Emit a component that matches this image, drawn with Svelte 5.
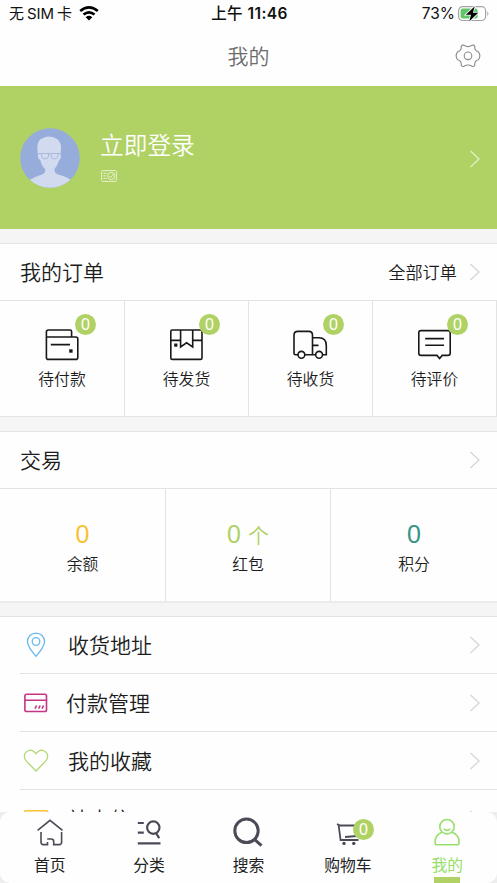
<script lang="ts">
  type Order = { icon: string; label: string; count: number };
  type Asset = { value: string; unit?: string; label: string; tone: string };
  type Tab = { icon: string; label: string; badge?: number };

  const orders: Order[] = [
    { icon: 'wallet', label: '待付款', count: 0 },
    { icon: 'box', label: '待发货', count: 0 },
    { icon: 'truck', label: '待收货', count: 0 },
    { icon: 'comment', label: '待评价', count: 0 },
  ];

  const assets: Asset[] = [
    { value: '0', label: '余额', tone: 'yellow' },
    { value: '0', unit: '个', label: '红包', tone: 'green' },
    { value: '0', label: '积分', tone: 'teal' },
  ];

  const menu = [
    { icon: 'pin', label: '收货地址' },
    { icon: 'card', label: '付款管理' },
    { icon: 'heart', label: '我的收藏' },
    { icon: 'mail', label: '站内信' },
  ];

  const tabs: Tab[] = [
    { icon: 'home', label: '首页' },
    { icon: 'category', label: '分类' },
    { icon: 'search', label: '搜索' },
    { icon: 'cart', label: '购物车', badge: 0 },
    { icon: 'user', label: '我的' },
  ];

  let active = $state('user');
</script>

{#snippet arrow()}
  <svg class="arrow" width="12" height="20" viewBox="0 0 12 20">
    <path d="M1.5 2L10 10L1.5 18" />
  </svg>
{/snippet}

<div class="screen">
  <div class="status">
    <div class="carrier">
      <span>无 SIM 卡</span>
      <svg width="20" height="15" viewBox="0 0 20 15">
        <path class="wave" d="M1.2 5.1Q10-2.3 18.8 5.1M4.5 8.6Q10 4.1 15.5 8.6" />
        <path d="M6.7 11.2Q10 8.4 13.3 11.2L10 14.6Z" />
      </svg>
    </div>
    <div class="clock">上午 <b>11:46</b></div>
    <div class="power">
      <span>73%</span>
      <svg width="33" height="18" viewBox="0 0 33 18">
        <rect x="1.6" y="1.7" width="27" height="13.8" rx="4" fill="#fff" stroke="#a3a3a3" stroke-width="1.2" />
        <rect x="3.6" y="3.6" width="17" height="10" rx="2" fill="#62c466" />
        <path d="M30.3 6.2Q32.6 8.6 30.3 11Z" fill="#a3a3a3" />
        <path class="bolt" d="M17.8 1.2L8.8 9.8H14L12.2 16.6L21.3 7.7H15.9Z" />
      </svg>
    </div>
  </div>

  <header>
    <h1>我的</h1>
    <svg class="gear" width="26" height="26" viewBox="0 0 26 26">
      <path d="M6.2 3.3Q7.3 1.6 9 2.3Q13 5 17 2.3Q18.8 1.6 19.8 3.3Q19.2 7.6 23.4 8.9Q26.3 12.8 23.4 16.8Q19.2 18 19.8 22.2Q18.8 24 17 23.2Q13 20.7 9 23.2Q7.3 24 6.2 22.2Q6.8 18 2.6 16.8Q-.3 12.8 2.6 8.9Q6.8 7.6 6.2 3.3Z" />
      <circle cx="13" cy="12.8" r="3.8" />
    </svg>
  </header>

  <section class="profile">
    <svg class="avatar" width="60" height="60" viewBox="0 0 60 60">
      <clipPath id="round"><circle cx="30" cy="30" r="29.8" /></clipPath>
      <g clip-path="url(#round)">
        <rect width="60" height="60" fill="#96acdb" />
        <path fill="#d1daee" d="M18 27Q15.5 13 22 10.5Q29 6.5 37 11Q42.5 14 40.5 27Q42 29.5 39 32.5Q37.5 38 34.5 41Q34 45 38 46.5Q49 49 53 54V60H7V54Q13 49 22 46.5Q26 45 25 41Q21.5 38 20.5 32.5Q17 29.5 18 27Z" />
        <path fill="none" stroke="#a9bade" stroke-width="1" d="M17 25.5H41.5M21.5 25.5V28Q22 31 25 31Q28 31 28.5 28V26M31 26V28Q31.5 31 34.5 31Q37.5 31 38 28V25.5" />
      </g>
    </svg>
    <div class="login">
      <span>立即登录</span>
      <svg width="16" height="12" viewBox="0 0 16 12">
        <rect x=".6" y=".6" width="14.8" height="10.8" rx="1" />
        <path d="M2.5 3.3H5.5M2.5 5.8H4.8M2.5 8.3H5.5M8.4 6L9.8 7.5L13 3.5" />
        <circle cx="10.2" cy="6" r="3.6" />
      </svg>
    </div>
    {@render arrow()}
  </section>

  <section class="panel orders">
    <div class="head">
      <h2>我的订单</h2>
      <span class="more">全部订单</span>
      {@render arrow()}
    </div>
    <div class="grid four">
      {#each orders as order (order.icon)}
        <div class="order">
          <div class="icon">
            <svg width="36" height="36" viewBox="0 0 36 36">
              {#if order.icon === 'wallet'}
                <path d="M27.6 11V5.6Q27.6 4 26 4H4.4Q2.4 4 2.4 6V31.4Q2.4 33.4 4.4 33.4H31.8Q33.8 33.4 33.8 31.4V13Q33.8 11 31.8 11H2.4M6.8 18.6H26" />
                <rect class="dot" x="25.2" y="23.3" width="3.4" height="3.4" />
              {:else if order.icon === 'box'}
                <rect x="2.8" y="4" width="31.2" height="29.4" rx="1.5" />
                <path d="M2.8 14.4H12.6M24.7 14.4H34M12.6 4V21L18.6 16.8L24.7 21V4" />
                <rect class="dot" x="6.2" y="17.5" width="3.2" height="3.2" />
              {:else if order.icon === 'truck'}
                <path d="M6 28.8H3.6Q2 28.8 2 27.2V9.2Q2 5.4 5.8 5.4H16.8Q20.5 5.4 20.5 9.2V28.8M12.8 28.8H23.6M20.5 11.8H27Q34.3 11.8 34.3 19.5V28.8H30.6M21 19.4H26.5" />
                <circle cx="9.4" cy="28.8" r="3.4" />
                <circle cx="27.1" cy="28.8" r="3.4" />
              {:else}
                <path d="M5 4.6H32Q34.2 4.6 34.2 6.8V27.2Q34.2 29.4 32 29.4H26.2L23.6 32.6L21 29.4H5Q2.8 29.4 2.8 27.2V6.8Q2.8 4.6 5 4.6ZM9.2 12.6H28M9.2 19.2H28" />
              {/if}
            </svg>
            <span class="badge">{order.count}</span>
          </div>
          <span>{order.label}</span>
        </div>
      {/each}
    </div>
  </section>

  <section class="panel assets">
    <div class="head">
      <h2>交易</h2>
      {@render arrow()}
    </div>
    <div class="grid three">
      {#each assets as asset (asset.label)}
        <div class="asset">
          <div class="value {asset.tone}">
            {asset.value}{#if asset.unit}<small>{asset.unit}</small>{/if}
          </div>
          <span>{asset.label}</span>
        </div>
      {/each}
    </div>
  </section>

  <section class="menu">
    {#each menu as item (item.icon)}
      <div class="row {item.icon}">
        <svg class="glyph" width="28" height="28" viewBox="0 0 28 28">
          {#if item.icon === 'pin'}
            <path d="M14 25.4Q5.4 15.2 5.4 10.4A8.6 8.3 0 0 1 22.6 10.4Q22.6 15.2 14 25.4Z" />
            <circle cx="14" cy="10.5" r="3.8" />
          {:else if item.icon === 'card'}
            <rect x="2.9" y="5.3" width="21.6" height="17.2" rx="1.8" />
            <path d="M3 11.2H24.5M13 19.7L14.6 16.5M16.6 19.7L18.2 16.5M20 19.7L21.6 16.5" />
          {:else if item.icon === 'heart'}
            <path d="M14 24L4.6 14.4Q.7 9.8 3.6 5.6Q8.8.2 14 6.6Q19.2.2 24.4 5.6Q27.3 9.8 23.4 14.4Z" />
          {:else}
            <rect x="2.3" y="5.7" width="23.6" height="18" rx="2" />
            <path d="M2.5 7.5L14 16.5L25.5 7.5" />
          {/if}
        </svg>
        <div class="line">
          <span>{item.label}</span>
          {@render arrow()}
        </div>
      </div>
    {/each}
  </section>

  <div class="dock">
    <nav>
      {#each tabs as tab (tab.icon)}
        <button class:active={active === tab.icon} onclick={() => (active = tab.icon)}>
          <div class="icon">
            <svg width="36" height="36" viewBox="0 0 36 36">
              {#if tab.icon === 'home'}
                <path d="M5.6 15.4L18 5.4L30.5 15.4M9 17V27.3Q9 29.6 11.3 29.6H15.5V27M15.2 24H19Q21.7 24 21.7 26.5V29.6H27.3Q29.6 29.6 29.6 27.3V17" />
              {:else if tab.icon === 'category'}
                <path class="bold" d="M6.8 8H12.8M6.8 17.7H12.8M6.8 28.3H29.5M25 18L28.2 23.2" />
                <circle class="bold" cx="22.3" cy="12.6" r="6.2" />
              {:else if tab.icon === 'search'}
                <circle class="heavy" cx="16.5" cy="15.8" r="11.7" />
                <path class="heavy" d="M24.8 24.6L31.5 30.6" />
              {:else if tab.icon === 'cart'}
                <path class="cart" d="M7 9L10 10.5H28M8.6 10L10.6 25H28.5M15 22L27 21" />
                <circle class="wheel" cx="14" cy="28.4" r="1.7" />
                <circle class="wheel" cx="23.8" cy="28.4" r="1.7" />
              {:else}
                <circle cx="18" cy="11.7" r="7.2" />
                <path d="M13 17.3Q6 20 6 27.5Q6 29.8 8.3 29.8H27.9Q30.2 29.8 30.2 27.5Q30.2 20 23 17.3M14.7 13.7Q18 17 21.3 13.7" />
              {/if}
            </svg>
            {#if tab.badge !== undefined}
              <span class="badge">{tab.badge}</span>
            {/if}
          </div>
          <span>{tab.label}</span>
        </button>
      {/each}
    </nav>
  </div>
</div>

<style>
  :global(body) {
    margin: 0;
    background: #f5f5f5;
  }
  .screen {
    position: relative;
    width: 497px;
    height: 883px;
    overflow: hidden;
    background: #f5f5f5;
    color: #1c1c1c;
    font-family: 'Liberation Sans', 'Noto Sans CJK SC', sans-serif;
    font-weight: 350;
  }
  svg {
    display: block;
    flex: none;
  }
  h1,
  h2 {
    margin: 0;
    font-weight: inherit;
    font-size: 21px;
  }

  .status {
    display: grid;
    grid-template-columns: 1fr auto 1fr;
    align-items: center;
    height: 28px;
    padding: 0 7px 0 9px;
    background: #fefefe;
    color: #111;
    font-family: Inter, 'Noto Sans CJK SC', sans-serif;
    font-weight: 400;
    font-size: 15.5px;
    line-height: 28px;
  }
  .carrier,
  .power {
    display: flex;
    align-items: center;
  }
  .carrier {
    gap: 7px;
    font-size: 15px;
    word-spacing: -1.3px;
  }
  .carrier svg {
    margin-top: -1px;
  }
  .wave {
    fill: none;
    stroke: #000;
    stroke-width: 2.6;
  }
  .clock {
    font-weight: 500;
    letter-spacing: 0.4px;
  }
  .clock b {
    font-weight: 600;
  }
  .power {
    justify-content: flex-end;
    gap: 2px;
  }
  .bolt {
    stroke: #fff;
    stroke-width: 1.6;
    paint-order: stroke;
  }

  header {
    display: grid;
    grid-template-columns: 1fr auto 1fr;
    align-items: center;
    height: 58px;
    padding: 0 16px;
    background: #fefefe;
  }
  header h1 {
    grid-column: 2;
    color: #6c6c6c;
    line-height: 56px;
  }
  .gear {
    justify-self: end;
    margin-top: -2px;
    fill: none;
    stroke: #8b8b8b;
    stroke-width: 1.1;
  }

  .arrow {
    fill: none;
    stroke: #d6d6d6;
    stroke-width: 1.3;
  }

  .profile {
    display: flex;
    align-items: center;
    height: 143px;
    padding: 0 16px 0 20px;
    background: #b0d265;
  }
  .profile .arrow {
    margin-top: 2px;
    stroke: #e2efc8;
  }
  .login {
    flex: 1;
    margin: -5px 0 0 20px;
    color: #fff;
    font-size: 23.7px;
    line-height: 34px;
  }
  .login svg {
    margin: 7px 0 0 1px;
    fill: none;
    stroke: #e6f1cd;
    stroke-width: 1;
  }

  .panel {
    margin-top: 14px;
    border-top: 1px solid #e3e3e3;
    border-bottom: 1px solid #e3e3e3;
    background: #fefefe;
  }
  .head {
    display: flex;
    align-items: center;
    height: 56px;
    padding: 0 16px 0 20px;
    border-bottom: 1px solid #e3e3e3;
  }
  .head h2 {
    flex: 1;
    margin-top: -2px;
  }
  .more {
    margin: -2px 12px 0 0;
    font-size: 17.2px;
  }
  .grid {
    display: grid;
  }
  .four {
    grid-template-columns: 125px repeat(3, 124px);
    height: 115px;
  }
  .three {
    grid-template-columns: 166px 165px 166px;
    height: 112px;
  }
  .order,
  .asset {
    display: flex;
    flex-direction: column;
    align-items: center;
    box-sizing: border-box;
    border-right: 1px solid #e3e3e3;
    font-size: 15.8px;
    line-height: 24px;
  }
  .order {
    padding-top: 25px;
  }
  .order > span {
    margin-top: 6px;
  }
  .asset {
    padding-top: 29px;
  }
  .asset > span {
    margin-top: 3px;
  }
  .asset:last-child {
    border-right: none;
  }
  .icon {
    position: relative;
    width: 36px;
    height: 36px;
  }
  .icon svg {
    fill: none;
    stroke: currentColor;
    stroke-width: 1.6;
  }
  .order .icon {
    color: #181818;
  }
  .order + .order .icon {
    margin-right: 1px;
  }
  .icon .dot {
    fill: #181818;
    stroke: none;
  }
  .badge {
    position: absolute;
    top: -12px;
    left: 31px;
    width: 21px;
    height: 21px;
    border-radius: 50%;
    background: #b0d265;
    color: #fff;
    font-size: 16px;
    line-height: 21px;
    text-align: center;
  }
  .assets {
    border-bottom-width: 2px;
    border-bottom-color: #ebebeb;
  }
  .value {
    display: flex;
    align-items: baseline;
    height: 32px;
    font-size: 25px;
    line-height: 32px;
  }
  .value small {
    margin-left: 7px;
    font-size: 21px;
  }
  .yellow {
    color: #f7c133;
  }
  .green {
    color: #b0d265;
  }
  .teal {
    color: #369484;
  }

  .menu {
    margin-top: 13px;
    border-top: 1px solid #e3e3e3;
    background: #fefefe;
  }
  .row {
    display: flex;
    align-items: center;
    height: 58px;
    margin-left: 20px;
    border-bottom: 1px solid #e3e3e3;
    box-sizing: border-box;
  }
  .row.pin {
    height: 57px;
  }
  .glyph {
    margin: 0 18px 0 2px;
    fill: none;
    stroke-width: 1.3;
  }
  .pin .glyph {
    stroke: #68b8ef;
  }
  .card .glyph {
    margin-right: 16px;
    stroke: #c53485;
    stroke-width: 1.6;
  }
  .heart .glyph {
    stroke: #b0d873;
  }
  .mail .glyph {
    stroke: #f7c133;
    stroke-width: 1.6;
  }
  .line {
    display: flex;
    flex: 1;
    align-items: center;
    justify-content: space-between;
    padding-right: 16px;
    font-size: 21px;
    line-height: 30px;
  }
  .line span {
    padding-top: 2px;
  }

  .dock {
    position: absolute;
    right: 0;
    bottom: 0;
    left: 0;
    background: #ededed;
  }
  nav {
    display: grid;
    grid-template-columns: repeat(5, 1fr);
    height: 71px;
    overflow: hidden;
    border-radius: 10px;
    background: #fefefe;
  }
  nav button {
    position: relative;
    display: flex;
    flex-direction: column;
    align-items: center;
    padding: 3px 0 0;
    border: none;
    background: none;
    color: #222;
    font: inherit;
    font-size: 15.8px;
    font-weight: 400;
    line-height: 24px;
    cursor: pointer;
  }
  nav .icon {
    margin-bottom: 3px;
    color: #4a4b57;
  }
  nav .badge {
    top: 4px;
    left: 23px;
  }
  .icon .bold {
    stroke-width: 2.2;
  }
  .icon .heavy {
    stroke-width: 3;
  }
  .icon .cart {
    stroke-width: 1.8;
  }
  .icon .wheel {
    fill: currentColor;
    stroke: none;
  }
  nav .active,
  nav .active .icon {
    color: #97df6b;
  }
  nav .active::after {
    position: absolute;
    bottom: 0;
    width: 26px;
    height: 6px;
    background: #b0d265;
    content: '';
  }
</style>
